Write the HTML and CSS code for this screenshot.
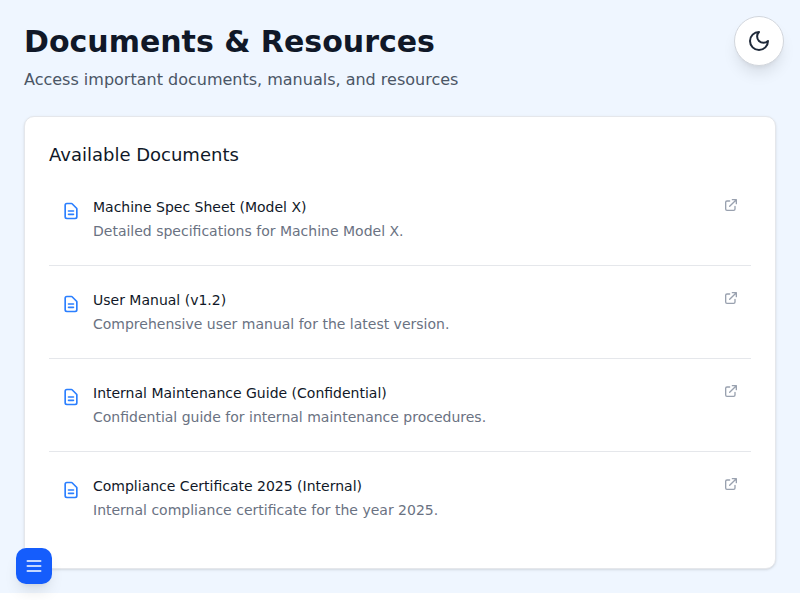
FILE: index.html
```html
<!DOCTYPE html>
<html lang="en">
<head>
<meta charset="utf-8">
<title>Documents &amp; Resources</title>
<link rel="stylesheet" href="styles.css">
</head>
<body>
<svg class="sprite" aria-hidden="true">
  <symbol id="file" viewBox="0 0 24 24"><path d="M9 12h6m-6 4h6m2 5H7a2 2 0 0 1-2-2V5a2 2 0 0 1 2-2h5.586a1 1 0 0 1 .707.293l5.414 5.414a1 1 0 0 1 .293.707V19a2 2 0 0 1-2 2z"/></symbol>
  <symbol id="external" viewBox="0 0 24 24"><path d="M10 6H6a2 2 0 0 0-2 2v10a2 2 0 0 0 2 2h10a2 2 0 0 0 2-2v-4M14 4h6m0 0v6m0-6L10 14"/></symbol>
</svg>
<main class="page">
  <header class="heading">
    <h1>Documents &amp; Resources</h1>
    <p>Access important documents, manuals, and resources</p>
  </header>
  <section class="card">
    <h2>Available Documents</h2>
    <ul class="docs">
      <li><svg class="file"><use href="#file"/></svg><div class="info"><h3>Machine Spec Sheet (Model X)</h3><p>Detailed specifications for Machine Model X.</p></div><svg class="external"><use href="#external"/></svg></li>
      <li><svg class="file"><use href="#file"/></svg><div class="info"><h3>User Manual (v1.2)</h3><p>Comprehensive user manual for the latest version.</p></div><svg class="external"><use href="#external"/></svg></li>
      <li><svg class="file"><use href="#file"/></svg><div class="info"><h3>Internal Maintenance Guide (Confidential)</h3><p>Confidential guide for internal maintenance procedures.</p></div><svg class="external"><use href="#external"/></svg></li>
      <li><svg class="file"><use href="#file"/></svg><div class="info"><h3>Compliance Certificate 2025 (Internal)</h3><p>Internal compliance certificate for the year 2025.</p></div><svg class="external"><use href="#external"/></svg></li>
    </ul>
  </section>
</main>
<button class="theme" aria-label="Theme"><svg viewBox="0 0 24 24"><path d="M12 3a6 6 0 0 0 9 9 9 9 0 1 1-9-9Z"/></svg></button>
<button class="menu" aria-label="Menu"><svg viewBox="0 0 24 24"><path d="M4 6h16M4 12h16M4 18h16"/></svg></button>
</body>
</html>
```
FILE: styles.css
```css
* { box-sizing: border-box; margin: 0; padding: 0; }
html { background: #fff; }
body { min-height: 593px; background: #eff6ff; font-family: "DejaVu Sans", sans-serif; color: #101828; }
svg { fill: none; stroke: currentColor; stroke-width: 2; stroke-linecap: round; stroke-linejoin: round; }
.sprite { display: none; }
.page { padding: 24px; }
.heading { margin-bottom: 24px; }
h1 { font-size: 30px; line-height: 36px; font-weight: 700; margin-bottom: 8px; }
.heading p { font-size: 16px; line-height: 24px; color: #4a5565; }
.card { height: 453px; padding: 24px; background: #fff; border: 1px solid #e5e7eb; border-radius: 10px; box-shadow: 0 1px 3px rgba(0,0,0,.1), 0 1px 2px -1px rgba(0,0,0,.1); }
h2 { font-size: 18px; line-height: 28px; font-weight: 400; margin-bottom: 16px; }
.docs { list-style: none; }
.docs li { display: flex; padding: 24px 12px; border-bottom: 1px solid #e5e7eb; }
.docs li:first-child { padding-top: 12px; }
.docs li:last-child { border-bottom: 0; }
.file { width: 20px; height: 20px; margin: 4px 12px 0 0; color: #2b7fff; }
.info { flex: 1; }
h3 { font-size: 14px; line-height: 20px; font-weight: 400; margin-bottom: 4px; }
.info p { font-size: 14px; line-height: 20px; color: #6a7282; }
.external { width: 16px; height: 16px; color: #99a1af; }
button { position: fixed; display: flex; align-items: center; justify-content: center; }
.theme { top: 16px; right: 16px; width: 50px; height: 50px; border: 1px solid #d1d5dc; border-radius: 50%; background: #fff; color: #1e2939; box-shadow: 0 10px 15px -3px rgba(0,0,0,.1), 0 4px 6px -4px rgba(0,0,0,.1); }
.theme svg { width: 24px; height: 24px; }
.menu { left: 16px; bottom: 16px; width: 36px; height: 36px; border: 0; border-radius: 10px; background: #155dfc; color: #fff; box-shadow: 0 10px 15px -3px rgba(0,0,0,.1), 0 4px 6px -4px rgba(0,0,0,.1); }
.menu svg { width: 20px; height: 20px; }
```
